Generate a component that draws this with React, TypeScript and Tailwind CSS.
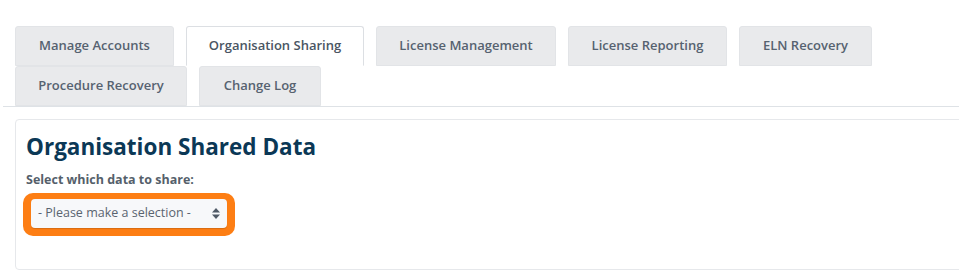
import React from "react";

const rowOne = [
  { label: "Manage Accounts", w: "w-[159px]" },
  { label: "Organisation Sharing", w: "w-[178px]", active: true },
  { label: "License Management", w: "w-[180px]" },
  { label: "License Reporting", w: "w-[159px]" },
  { label: "ELN Recovery", w: "w-[133px]" },
];

const rowTwo = [
  { label: "Procedure Recovery", w: "w-[172px]" },
  { label: "Change Log", w: "w-[122px]" },
];

function Tab({ label, w, active }: { label: string; w: string; active?: boolean }) {
  return (
    <div
      className={`${w} h-[40px] flex items-center justify-center rounded-t-[3px] border text-[13px] font-semibold ${
        active
          ? "bg-white border-[#dcdfe3] border-b-white text-[#4a5563]"
          : "bg-[#e9eaec] border-[#e2e4e7] text-[#566270]"
      }`}
    >
      {label}
    </div>
  );
}

export default function App() {
  return (
    <div
      className="w-[959px] h-[270px] overflow-hidden bg-white"
      style={{ fontFamily: '"Open Sans", "Noto Sans", sans-serif' }}
    >
      <div className="ml-[3px] pt-[26px] pl-[12px] border-b border-[#dee2e6]">
        <div className="flex gap-x-[12px]">
          {rowOne.map((t) => (
            <Tab key={t.label} {...t} />
          ))}
        </div>
        <div className="flex gap-x-[12px]">
          {rowTwo.map((t) => (
            <Tab key={t.label} {...t} />
          ))}
        </div>
      </div>

      <div className="ml-[15px] mt-[12px] w-[1000px] h-[151px] rounded-[4px] border border-[#e6e8eb] pl-[10px] pt-[12px]">
        <h2 className="text-[22.5px] leading-[30px] font-bold text-[#0b3856]">Organisation Shared Data</h2>
        <div className="mt-[10px] text-[12.5px] leading-[16px] font-bold text-[#555f6b]">
          Select which data to share:
        </div>
        <div className="mt-[5px] -ml-[3px] w-[212px] rounded-[10px] bg-[#fd7e14] px-[8px] pt-[6px] pb-[8px]">
          <div className="h-[29px] rounded-[4px] bg-[#f7f8fa] shadow-[0_1px_1px_rgba(0,0,0,0.15)] flex items-center justify-between pl-[7px] pr-[7px]">
            <span className="text-[12.5px] text-[#5a6470]">- Please make a selection -</span>
            <svg width="8" height="11" viewBox="0 0 8 11" className="text-[#4f5966]">
              <path d="M4 0 L8 4.5 H0 Z" fill="currentColor" />
              <path d="M4 11 L8 6.5 H0 Z" fill="currentColor" />
            </svg>
          </div>
        </div>
      </div>
    </div>
  );
}
